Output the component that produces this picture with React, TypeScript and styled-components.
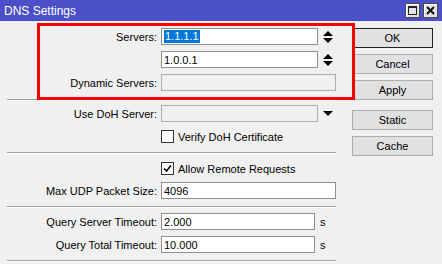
import { ReactElement, ReactNode } from 'react';
import styled, { createGlobalStyle } from 'styled-components';

const GlobalStyle = createGlobalStyle`
  body {
    margin: 0;
    background: #f0f0f0;
    color: #000;
    font-family: "Liberation Sans", Arial, sans-serif;
    font-size: 11px;
  }
`;

const Window = styled.div`
  background: #f0f0f0;
  height: 264px;
  overflow: hidden;
  position: relative;
  width: 442px;
`;

const TitleBar = styled.div`
  align-items: center;
  background: #4b4fc8;
  color: #fff;
  display: flex;
  font-size: 12px;
  height: 21px;
  justify-content: space-between;
  padding: 0 4px;
`;

const TitleButtons = styled.div`
  display: flex;
  gap: 3px;
`;

const TitleButton = styled.div`
  align-items: center;
  background: #e4e4e4;
  border: 1px solid #4a4a4a;
  box-shadow: inset 1px 1px 0 #fff;
  box-sizing: border-box;
  display: flex;
  height: 15px;
  justify-content: center;
  width: 15px;
`;

const MaxBox = styled.div`
  border: 1px solid #222;
  border-top-width: 2px;
  box-sizing: border-box;
  height: 9px;
  width: 9px;
`;

const Body = styled.div`
  align-items: flex-start;
  display: flex;
`;

const Form = styled.div`
  box-sizing: border-box;
  display: flex;
  flex-direction: column;
  padding-left: 7px;
  width: 336px;
`;

const Row = styled.div<{ $top: number }>`
  align-items: center;
  column-gap: 4px;
  display: grid;
  grid-template-columns: 150px 175px;
  height: 17px;
  margin-top: ${p => p.$top}px;
`;

const Label = styled.div`
  text-align: right;
  white-space: nowrap;
`;

const Field = styled.div`
  align-items: center;
  display: flex;
  height: 17px;
`;

const TextBox = styled.div<{ $width?: number; $disabled?: boolean }>`
  align-items: center;
  background: ${p => (p.$disabled ? '#f0f0f0' : '#fff')};
  border: 1px solid ${p => (p.$disabled ? '#acacac' : '#8f8f8f')};
  box-sizing: border-box;
  display: flex;
  height: 17px;
  padding: 0 2px;
  width: ${p => (p.$width ? `${p.$width}px` : '100%')};
`;

const Selected = styled.span`
  background: #0078d7;
  color: #fff;
  line-height: 13px;
  padding: 0 1px;
`;

const Trailer = styled.div`
  align-items: center;
  display: flex;
  margin-left: 5px;
`;

const Unit = styled.span`
  margin-left: 5px;
`;

const CheckBox = styled.div`
  align-items: center;
  background: #fff;
  border: 1px solid #333;
  box-sizing: border-box;
  display: flex;
  height: 13px;
  justify-content: center;
  width: 13px;
`;

const CheckText = styled.span`
  margin-left: 4px;
`;

const Separator = styled.div<{ $top: number }>`
  border-bottom: 1px solid #fff;
  border-top: 1px solid #a0a0a0;
  margin-top: ${p => p.$top}px;
  width: 329px;
`;

const Buttons = styled.div`
  display: flex;
  flex-direction: column;
  gap: 6px;
  margin-left: 16px;
  padding-top: 7px;
`;

const Button = styled.div<{ $default?: boolean; $top?: number }>`
  align-items: center;
  background: #e1e1e1;
  border: 1px solid ${p => (p.$default ? '#222' : '#adadad')};
  box-sizing: border-box;
  display: flex;
  height: 20px;
  justify-content: center;
  margin-top: ${p => p.$top || 0}px;
  width: 81px;
`;

const Highlight = styled.div`
  border: 3px solid #ff0000;
  box-sizing: border-box;
  height: 77px;
  left: 37px;
  pointer-events: none;
  position: absolute;
  top: 23px;
  width: 318px;
`;

function Spinner(): ReactElement {
  return (
    <svg width="10" height="14" viewBox="0 0 10 14">
      <polygon points="0,6 5,1 10,6" fill="#000" />
      <polygon points="0,8 5,13 10,8" fill="#000" />
    </svg>
  );
}

function DropArrow(): ReactElement {
  return (
    <svg width="10" height="6" viewBox="0 0 10 6">
      <polygon points="0,0 10,0 5,5" fill="#000" />
    </svg>
  );
}

function Check(props: { checked?: boolean; children: ReactNode }): ReactElement {
  return (
    <Field>
      <CheckBox>
        {props.checked && (
          <svg width="9" height="9" viewBox="0 0 9 9">
            <path d="M1 4.5 L3.5 7 L8 1.5" stroke="#000" strokeWidth="1.6" fill="none" />
          </svg>
        )}
      </CheckBox>
      <CheckText>{props.children}</CheckText>
    </Field>
  );
}

export default function App(): ReactElement {
  return (
    <Window>
      <GlobalStyle />
      <TitleBar>
        <span>DNS Settings</span>
        <TitleButtons>
          <TitleButton><MaxBox /></TitleButton>
          <TitleButton>
            <svg width="9" height="9" viewBox="0 0 9 9">
              <path d="M1 1 L8 8 M8 1 L1 8" stroke="#111" strokeWidth="2" />
            </svg>
          </TitleButton>
        </TitleButtons>
      </TitleBar>

      <Body>
        <Form>
          <Row $top={7}>
            <Label>Servers:</Label>
            <Field>
              <TextBox $width={157}><Selected>1.1.1.1</Selected></TextBox>
              <Trailer><Spinner /></Trailer>
            </Field>
          </Row>
          <Row $top={6}>
            <Label />
            <Field>
              <TextBox $width={157}>1.0.0.1</TextBox>
              <Trailer><Spinner /></Trailer>
            </Field>
          </Row>
          <Row $top={6}>
            <Label>Dynamic Servers:</Label>
            <Field><TextBox $disabled /></Field>
          </Row>

          <Separator $top={8} />

          <Row $top={4}>
            <Label>Use DoH Server:</Label>
            <Field>
              <TextBox $width={157} $disabled />
              <Trailer><DropArrow /></Trailer>
            </Field>
          </Row>
          <Row $top={6}>
            <Label />
            <Check>Verify DoH Certificate</Check>
          </Row>

          <Separator $top={7} />

          <Row $top={6}>
            <Label />
            <Check checked>Allow Remote Requests</Check>
          </Row>
          <Row $top={5}>
            <Label>Max UDP Packet Size:</Label>
            <Field><TextBox>4096</TextBox></Field>
          </Row>

          <Separator $top={7} />

          <Row $top={5}>
            <Label>Query Server Timeout:</Label>
            <Field>
              <TextBox $width={154}>2.000</TextBox>
              <Unit>s</Unit>
            </Field>
          </Row>
          <Row $top={6}>
            <Label>Query Total Timeout:</Label>
            <Field>
              <TextBox $width={154}>10.000</TextBox>
              <Unit>s</Unit>
            </Field>
          </Row>

          <Separator $top={7} />
        </Form>

        <Buttons>
          <Button $default>OK</Button>
          <Button>Cancel</Button>
          <Button>Apply</Button>
          <Button $top={4}>Static</Button>
          <Button>Cache</Button>
        </Buttons>
      </Body>

      <Highlight />
    </Window>
  );
}
